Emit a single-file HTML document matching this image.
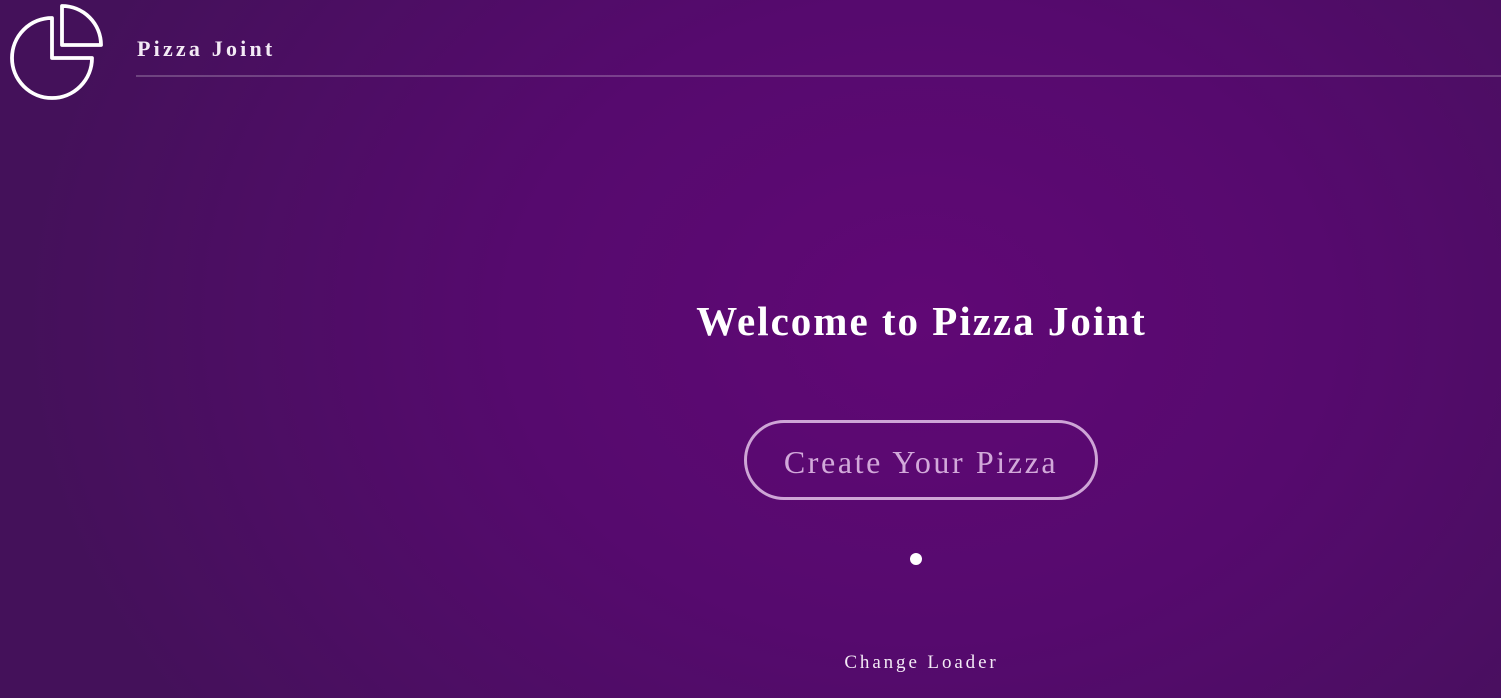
<!DOCTYPE html>
<html><head><meta charset="utf-8"><style>
html,body{margin:0;padding:0;width:1501px;height:698px;overflow:hidden}
body{background:radial-gradient(ellipse 900px 700px at 920px 320px,#600875 0%,#560a6e 45%,#44115a 100%);font-family:"Liberation Serif",serif;color:#fff;position:relative}
.logo{position:absolute;left:0;top:0}
.brand{position:absolute;left:137px;top:36px;font-size:22px;font-weight:bold;letter-spacing:3.2px;color:#f3eaf5}
.line{position:absolute;left:136px;right:0;top:75px;height:2px;background:rgba(255,255,255,0.22)}
h1{position:absolute;left:0;width:1843px;top:297px;margin:0;text-align:center;font-size:41px;font-weight:bold;letter-spacing:2px;line-height:48px}
.btn{position:absolute;left:744px;top:420px;width:348px;height:74px;border:3px solid rgba(235,205,240,0.8);border-radius:42px;text-align:center;line-height:79px;font-size:32px;letter-spacing:2.6px;color:#d2a9da}
.dot{position:absolute;left:910px;top:553px;width:12px;height:12px;border-radius:50%;background:#fff}
.cl{position:absolute;left:0;width:1843px;top:652px;text-align:center;font-size:19px;letter-spacing:2.9px;color:#f3eaf5}
</style></head><body>
<svg class="logo" width="110" height="105" viewBox="0 0 110 105" fill="none" stroke="#fff" stroke-width="3.8" stroke-linejoin="round">
<path d="M52 18 V58 H92 A40 40 0 1 1 52 18 Z"/>
<path d="M62 6 V45 H101 A39 39 0 0 0 62 6 Z"/>
</svg>
<div class="brand">Pizza Joint</div>
<div class="line"></div>
<h1>Welcome to Pizza Joint</h1>
<div class="btn">Create Your Pizza</div>
<div class="dot"></div>
<div class="cl">Change Loader</div>
</body></html>
